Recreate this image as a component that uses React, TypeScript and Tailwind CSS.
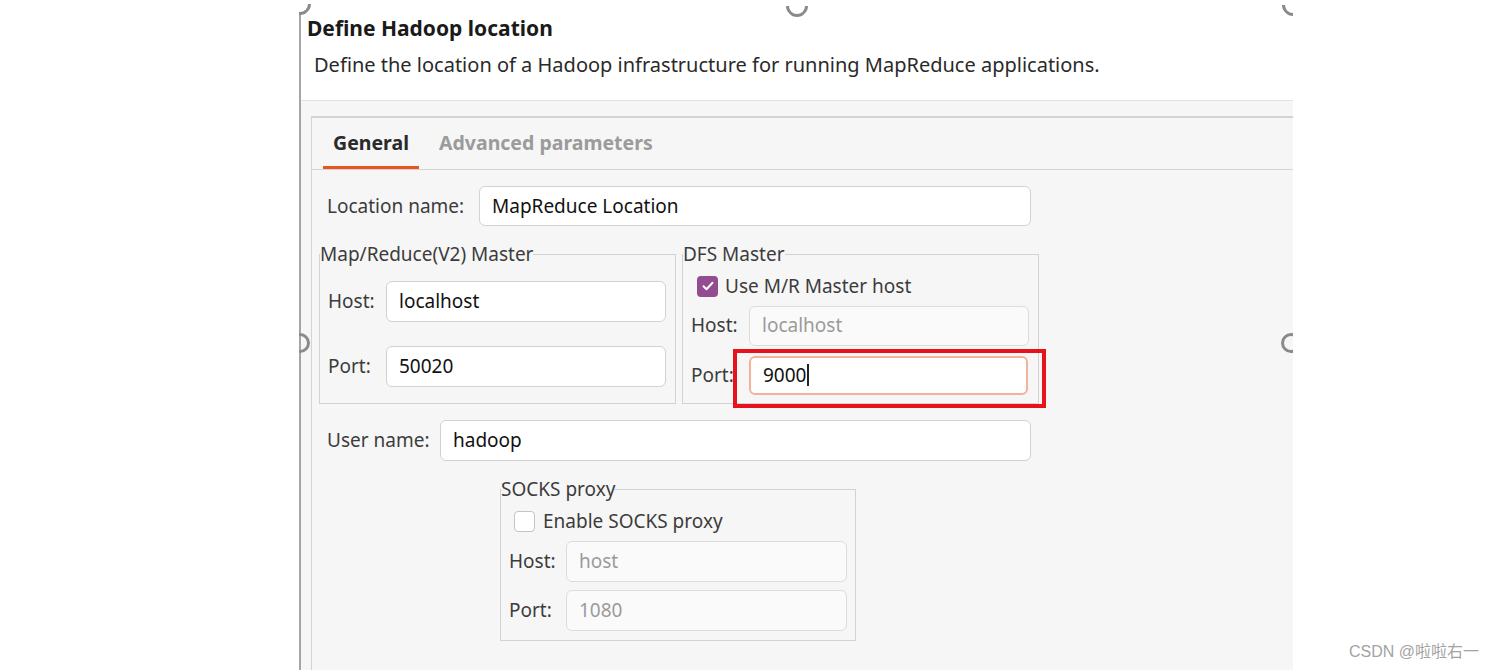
import type { ReactNode } from 'react';

const font = { fontFamily: '"Noto Sans", "Open Sans", sans-serif' };

function Field({
  value,
  className,
  disabled,
  focused,
}: {
  value: string;
  className: string;
  disabled?: boolean;
  focused?: boolean;
}) {
  return (
    <div
      className={`${className} flex items-center rounded-[6px] px-3 text-[19px] ${
        disabled
          ? 'bg-[#fafafa] border border-[#dcdcdc] text-[#9a9a9a]'
          : focused
            ? 'bg-white border-2 border-[#f3b29c] text-[#111]'
            : 'bg-white border border-[#d2d2d2] text-[#111]'
      }`}
    >
      <span>{value}</span>
      {focused && <span className="ml-[1px] h-[22px] w-[1.5px] bg-[#222]" />}
    </div>
  );
}

function Check({ checked }: { checked?: boolean }) {
  return checked ? (
    <div className="flex h-[21px] w-[21px] items-center justify-center rounded-[4px] bg-[#924c8f]">
      <svg width="14" height="14" viewBox="0 0 14 14" fill="none">
        <path d="M2.5 7.2l3 3 6-6.4" stroke="white" strokeWidth="2" strokeLinecap="round" strokeLinejoin="round" />
      </svg>
    </div>
  ) : (
    <div className="h-[21px] w-[21px] rounded-[4px] border border-[#c4c4c4] bg-white" />
  );
}

function Group({ title, className, children }: { title: string; className: string; children: ReactNode }) {
  return (
    <fieldset className={`${className} border border-[#d2d2d2] p-0 m-0 min-w-0`}>
      <legend className="px-0 ml-0 text-[19px] leading-[24px] text-[#3c3c3c]">{title}</legend>
      {children}
    </fieldset>
  );
}

function Handle({ className }: { className: string }) {
  return <div className={`${className} absolute h-[20px] w-[20px] rounded-full border-[3px] border-[#8a8a8a]`} />;
}

function TopHandle({ className }: { className: string }) {
  return (
    <div
      className={`${className} absolute h-[22px] w-[22px] -rotate-45 rounded-full border-[3px] border-transparent border-b-[#8a8a8a] border-l-[#8a8a8a]`}
    />
  );
}

export default function App() {
  return (
    <div className="relative h-[670px] w-[1500px] overflow-hidden bg-white" style={font}>
      <div className="relative ml-[299px] h-[670px] w-[994px] overflow-hidden bg-[#f6f6f6]">
        {/* left frame edge */}
        <div className="absolute left-0 top-[12px] h-[660px] w-[2px] bg-[#a5a5a5]" />

        {/* header */}
        <div className="h-[101px] border-b border-[#e2e2e2] bg-white pl-[2px]">
          <div className="pl-[6px] pt-[14px] text-[21px] font-bold leading-[28px] text-[#1a1a1a]">Define Hadoop location</div>
          <div className="pl-[13px] pt-[9px] text-[20px] leading-[28px] text-[#2a2a2a]">
            Define the location of a Hadoop infrastructure for running MapReduce applications.
          </div>
        </div>

        {/* tab folder */}
        <div className="ml-[12px] mt-[15px] h-[600px] border-l border-t-2 border-[#d4d4d4] bg-[#f6f6f6]">
          <div className="flex h-[52px] items-end border-b border-[#d4d4d4] pl-[11px]">
            <div className="flex h-[52px] w-[96px] flex-col items-center justify-center border-b-[3px] border-[#e9541f] pt-[3px] text-[19.5px] font-bold text-[#2a2a2a]">
              General
            </div>
            <div className="flex h-[52px] items-center pl-[20px] text-[19.5px] font-bold text-[#9b9b9b]">
              Advanced parameters
            </div>
          </div>

          <div className="text-[19px] text-[#3c3c3c]">
            {/* location name */}
            <div className="mt-[16px] flex items-center pl-[15px]">
              <div className="w-[152px]">Location name:</div>
              <Field value="MapReduce Location" className="h-[40px] w-[552px]" />
            </div>

            {/* masters */}
            <div className="mt-[16px] flex">
              <Group title="Map/Reduce(V2) Master" className="ml-[7px] h-[162px] w-[357px]">
                <div className="mt-[15px] flex items-center pl-[8px]">
                  <div className="w-[58px]">Host:</div>
                  <Field value="localhost" className="h-[41px] w-[280px]" />
                </div>
                <div className="mt-[24px] flex items-center pl-[8px]">
                  <div className="w-[58px]">Port:</div>
                  <Field value="50020" className="h-[41px] w-[280px]" />
                </div>
              </Group>
              <Group title="DFS Master" className="ml-[6px] h-[162px] w-[357px]">
                <div className="mt-[6px] flex items-center gap-[7px] pl-[14px]">
                  <Check checked />
                  <span>Use M/R Master host</span>
                </div>
                <div className="mt-[5px] flex items-center pl-[8px]">
                  <div className="w-[58px]">Host:</div>
                  <Field value="localhost" disabled className="h-[40px] w-[280px]" />
                </div>
                <div className="mt-[10px] flex items-center pl-[8px]">
                  <div className="w-[58px]">Port:</div>
                  <Field value="9000" focused className="h-[39px] w-[279px]" />
                </div>
              </Group>
            </div>

            {/* user name */}
            <div className="mt-[16px] flex items-center pl-[15px]">
              <div className="w-[113px]">User name:</div>
              <Field value="hadoop" className="h-[41px] w-[591px]" />
            </div>

            {/* socks */}
            <Group title="SOCKS proxy" className="ml-[188px] mt-[16px] h-[164px] w-[356px]">
              <div className="mt-[6px] flex items-center gap-[8px] pl-[13px]">
                <Check />
                <span>Enable SOCKS proxy</span>
              </div>
              <div className="mt-[5px] flex items-center pl-[8px]">
                <div className="w-[57px]">Host:</div>
                <Field value="host" disabled className="h-[41px] w-[281px]" />
              </div>
              <div className="mt-[8px] flex items-center pl-[8px]">
                <div className="w-[57px]">Port:</div>
                <Field value="1080" disabled className="h-[41px] w-[281px]" />
              </div>
            </Group>
          </div>
        </div>

        {/* resize handles */}
        <TopHandle className="left-[-10px] top-[-7px]" />
        <TopHandle className="left-[487px] top-[-5px]" />
        <TopHandle className="left-[983px] top-[-6px]" />
        <Handle className="left-[-9px] top-[333px]" />
        <Handle className="left-[982px] top-[333px]" />

        {/* highlight */}
        <div className="absolute left-[434px] top-[349px] h-[59px] w-[313px] border-4 border-[#e8121d]" />
      </div>

      <div
        className="absolute left-[1349px] top-[641px] text-[16px] leading-[22px] text-[#a3a3a3]"
        style={{ fontFamily: '"Liberation Sans", "Noto Sans CJK SC", sans-serif' }}
      >
        CSDN @啦啦右一
      </div>
    </div>
  );
}
